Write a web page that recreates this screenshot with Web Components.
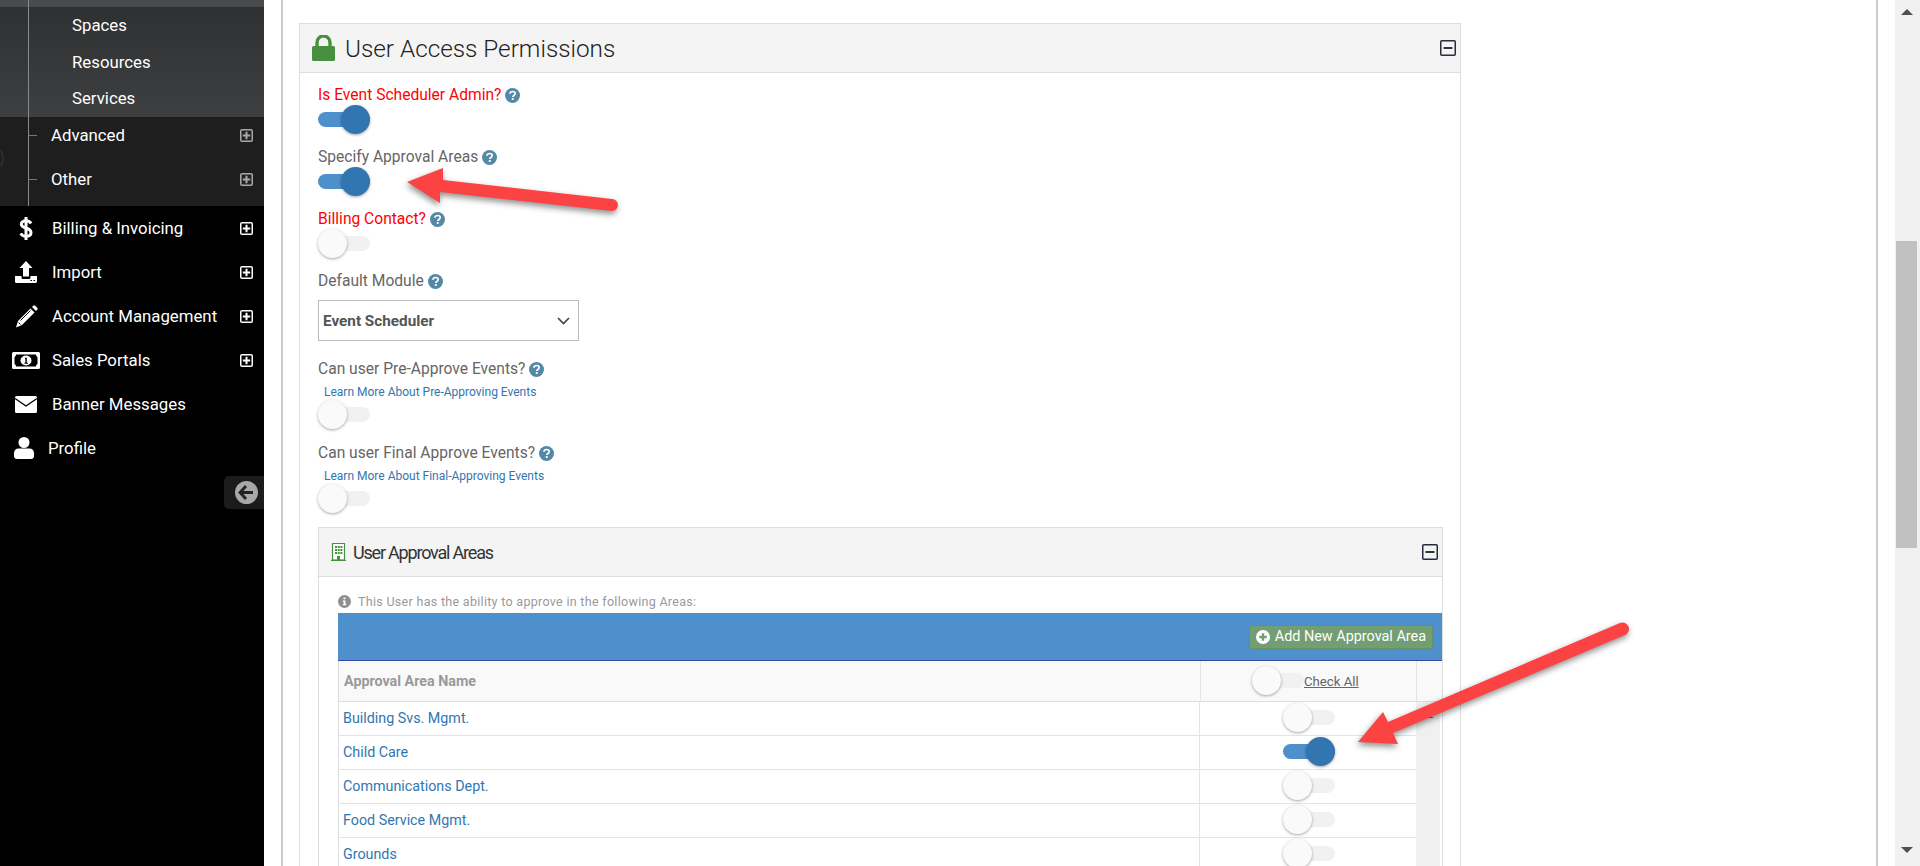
<!DOCTYPE html>
<html lang="en">
<head>
<meta charset="UTF-8">
<title>User Access Permissions</title>
<style>
    html, body { margin: 0; height: 866px; overflow: hidden; background: #fff; font-family: Roboto, "Liberation Sans", sans-serif; }
    body { display: flex; }
</style>
<script>
    const ICONS = {
        dollar: '<svg viewBox="0 0 14 25" width="14" height="25"><path d="M12 7.500C11 5.500 9 4.800 7 4.800 4.300 4.800 2.300 6 2.300 8.200 2.300 13 12 11 12 16.500 12 19 9.800 20.300 7 20.300 4.800 20.300 2.800 19.300 1.800 17.300" fill="none" stroke="#fff" stroke-width="3"/><path d="M5.500 1h3v23h-3z" fill="#fff"/></svg>',
        upload: '<svg viewBox="0 0 22 22" width="22" height="22"><path d="M11 0l6.500 7H14v8.500H8V7H4.500z" fill="#fff"/><path d="M0 15h6.500v1.500A1.500 1.500 0 0 0 8 18h6a1.500 1.500 0 0 0 1.500-1.500V15H22v5.500a1.500 1.500 0 0 1-1.500 1.500h-19A1.500 1.500 0 0 1 0 20.500z" fill="#fff"/><path d="M15.500 19.500h1.500M18.500 19.500h1.500" stroke="#000" stroke-width="1.200"/></svg>',
        pencil: '<svg viewBox="0 0 23 23" width="23" height="23"><path d="M15.500 3.500l4 4L7 20l-6 2.500L3 16z" fill="#fff"/><path d="M17 2l1.200-1.200a1.500 1.500 0 0 1 2 0l2 2a1.500 1.500 0 0 1 0 2L21 6z" fill="#fff"/><path d="M5.500 15.500l10-10M3.500 17.500l2 2" stroke="#000" stroke-width="1"/></svg>',
        money: '<svg viewBox="0 0 28 17" width="28" height="17"><path d="M0 1.500A1.500 1.500 0 0 1 1.500 0h25A1.500 1.500 0 0 1 28 1.500v14a1.500 1.500 0 0 1-1.500 1.500h-25A1.500 1.500 0 0 1 0 15.500z" fill="#fff"/><path d="M4 2.500h20c0 1.500 1 2.500 1.500 2.500v7c-.5 0-1.500 1-1.500 2.500H4c0-1.500-1-2.500-1.500-2.500V5C3 5 4 4 4 2.500z" fill="#000"/><ellipse cx="14" cy="8.500" rx="5.500" ry="5" fill="#fff"/><path d="M13 5.800h1.800v5H16v1h-3.600v-1h1V7h-.4z" fill="#000"/></svg>',
        envelope: '<svg viewBox="0 0 22 17" width="22" height="17"><path d="M0 1.500A1.500 1.500 0 0 1 1.500 0h19A1.500 1.500 0 0 1 22 1.500v14a1.500 1.500 0 0 1-1.500 1.500h-19A1.500 1.500 0 0 1 0 15.500z" fill="#fff"/><path d="M0 2.500l11 7.500 11-7.500" fill="none" stroke="#000" stroke-width="1.400"/></svg>',
        user: '<svg viewBox="0 0 20 22" width="20" height="22"><circle cx="10" cy="5.500" r="5.500" fill="#fff"/><path d="M0 19v-3c0-3 2-4.500 4.500-4.500h11C18 11.500 20 13 20 16v3c0 2-1.500 3-3 3H3c-1.500 0-3-1-3-3z" fill="#fff"/></svg>',
        lock: '<svg viewBox="0 0 23 26" width="23" height="26"><path d="M5 12V7.500a6.500 6.500 0 0 1 13 0V12" fill="none" stroke="#47903f" stroke-width="3.400"/><path d="M0 12.500A1.500 1.500 0 0 1 1.500 11h20a1.500 1.500 0 0 1 1.500 1.500v12a1.500 1.500 0 0 1-1.500 1.500h-20A1.500 1.500 0 0 1 0 24.500z" fill="#47903f"/></svg>',
        building: '<svg viewBox="0 0 15 18" width="15" height="18"><path d="M1.500.500h12v16.500h-12z" fill="#fff" stroke="#47903f" stroke-width="1.200"/><path d="M0 17.400h15" stroke="#47903f" stroke-width="1.200"/><path d="M4 3h2v2H4zM6.700 3h2v2h-2zM9.400 3h2v2h-2zM4 6h2v2H4zM6.700 6h2v2h-2zM9.400 6h2v2h-2zM4 9h2v2H4zM6.700 9h2v2h-2zM9.400 9h2v2h-2zM6 13h3v4H6z" fill="#47903f"/></svg>',
        help: '<svg viewBox="0 0 15 15" width="15" height="15"><circle cx="7.500" cy="7.500" r="7.500" fill="#5488a5"/><path d="M4.900 5.800c.1-1.500 1.200-2.300 2.700-2.300 1.500 0 2.600.8 2.600 2.100 0 1.900-2.400 1.900-2.400 3.500" fill="none" stroke="#fff" stroke-width="1.700"/><path d="M6.800 10h1.900v1.900H6.800z" fill="#fff"/></svg>',
        info: '<svg viewBox="0 0 13 13" width="13" height="13"><circle cx="6.500" cy="6.500" r="6.500" fill="#8f8f8f"/><path d="M5.500 2.500h2v1.800h-2zM4.800 5.500h2.700v3.600h.8v1.200H4.800V9.100h.8V6.700h-.8z" fill="#fff"/></svg>',
        plusCircle: '<svg viewBox="0 0 14 14" width="14" height="14"><circle cx="7" cy="7" r="7" fill="#fff"/><path d="M3.200 5.800h2.600V3.200h2.400v2.600h2.600v2.400H8.200v2.600H5.800V8.200H3.200z" fill="#739e73"/></svg>',
        back: '<svg viewBox="0 0 23 23" width="23" height="23"><circle cx="11.500" cy="11.500" r="11.500" fill="#a8a8a8"/><path d="M11 5L5 11.500l6 6.500M5.500 11.500H18" fill="none" stroke="#222" stroke-width="2.800"/></svg>',
        chevron: '<svg viewBox="0 0 13 8" width="13" height="8"><path d="M1 1l5.500 5.500L12 1" fill="none" stroke="#444" stroke-width="1.700"/></svg>'
    };

    class UiIcon extends HTMLElement {
        connectedCallback() {
            if (this.shadowRoot) return;
            this.attachShadow({ mode: 'open' });
            this.shadowRoot.innerHTML = `<style>:host{display:inline-flex;line-height:0}</style>${ICONS[this.getAttribute('name')]}`;
        }
    }
    customElements.define('ui-icon', UiIcon);

    // small square +/- box
    class BoxIcon extends HTMLElement {
        connectedCallback() {
            if (this.shadowRoot) return;
            this.attachShadow({ mode: 'open' });
            const minus = this.getAttribute('type') === 'minus';
            const c = this.getAttribute('color') || '#fff';
            this.shadowRoot.innerHTML = `<style>:host{display:inline-flex;line-height:0}</style>` + (minus
                ? `<svg viewBox="0 0 16 16" width="16" height="16"><rect x=".75" y=".75" width="14.500" height="14.500" rx="1" fill="none" stroke="#262c3a" stroke-width="1.500"/><path d="M3.500 8h9" stroke="#333" stroke-width="2"/></svg>`
                : `<svg viewBox="0 0 13 13" width="13" height="13"><rect width="13" height="13" rx="2" fill="${c}"/><rect x="1.500" y="1.500" width="10" height="10" fill="${this.getAttribute('inner') || '#000'}"/><path d="M2.800 6.500h7.400M6.500 2.800v7.400" stroke="${c}" stroke-width="2"/></svg>`);
        }
    }
    customElements.define('box-icon', BoxIcon);

    class NavItem extends HTMLElement {
        connectedCallback() {
            if (this.shadowRoot) return;
            this.attachShadow({ mode: 'open' });
            const expand = this.hasAttribute('expand');
            this.shadowRoot.innerHTML = `
            <style>
                :host { display: flex; align-items: center; height: 44px; color: #fff; font-size: 16.800px; padding-right: 11px; }
                .ic { width: ${this.getAttribute('icon-w') || '52'}px; flex: none; display: flex; justify-content: center; }
                .txt { flex: 1; white-space: nowrap; }
            </style>
            <span class="ic"><ui-icon name="${this.getAttribute('icon')}"></ui-icon></span>
            <span class="txt"><slot></slot></span>
            ${expand ? '<box-icon type="plus"></box-icon>' : ''}`;
        }
    }
    customElements.define('nav-item', NavItem);

    class NavSub extends HTMLElement {
        connectedCallback() {
            if (this.shadowRoot) return;
            this.attachShadow({ mode: 'open' });
            this.shadowRoot.innerHTML = `
            <style>
                :host { display: flex; align-items: center; height: 36px; margin-bottom: 8px; color: #fff; font-size: 16.800px; padding-left: 29px; padding-right: 11px; }
                i { width: 8px; height: 1px; background: #777; margin-right: 14px; flex: none; }
                span { flex: 1; }
            </style>
            <i></i><span><slot></slot></span><box-icon type="plus" color="#a9a9a9" inner="#222"></box-icon>`;
        }
    }
    customElements.define('nav-sub', NavSub);

    class AppSidebar extends HTMLElement {
        constructor() {
            super();
            this.attachShadow({ mode: 'open' });
            this.shadowRoot.innerHTML = `
            <style>
                :host { display: block; width: 264px; flex: none; height: 866px; background: #000; position: relative; overflow: hidden; font-family: Roboto, "Liberation Sans", sans-serif; }
                .tree { position: relative; }
                .tree::before { content: ""; position: absolute; left: 28px; top: 0; bottom: 0; width: 1px; background: #8a8a8a; z-index: 1; }
                .strip { height: 7px; background: #4a4b4d; }
                .leafs { height: 110px; background: linear-gradient(#2f3032, #3e3f41); display: flex; flex-direction: column; padding-left: 72px; box-sizing: border-box; }
                .leafs div { height: 36.500px; line-height: 36.500px; font-size: 16.800px; color: #fff; }
                .subs { background: #1e1e1e; height: 89px; }
                .collapse { position: absolute; right: 0; top: 476px; width: 40px; height: 33px; background: #1c1c1c; border-radius: 5px 0 0 5px; display: flex; align-items: center; padding-left: 11px; box-sizing: border-box; }
                .ghost { position: absolute; left: 0; top: 150px; }
            </style>
            <div class="tree">
                <div class="strip"></div>
                <div class="leafs"><div>Spaces</div><div>Resources</div><div>Services</div></div>
                <div class="subs"><nav-sub>Advanced</nav-sub><nav-sub>Other</nav-sub></div>
            </div>
            <svg class="ghost" width="6" height="17" viewBox="0 0 6 17"><path d="M0 1c4 1 4 14 0 15" fill="none" stroke="#3c3c3c"/></svg>
            <nav-item icon="dollar" expand>Billing &amp; Invoicing</nav-item>
            <nav-item icon="upload" expand>Import</nav-item>
            <nav-item icon="pencil" expand>Account Management</nav-item>
            <nav-item icon="money" expand>Sales Portals</nav-item>
            <nav-item icon="envelope">Banner Messages</nav-item>
            <nav-item icon="user" icon-w="48">Profile</nav-item>
            <div class="collapse"><ui-icon name="back"></ui-icon></div>`;
        }
    }
    customElements.define('app-sidebar', AppSidebar);

    class ToggleSwitch extends HTMLElement {
        constructor() {
            super();
            this.attachShadow({ mode: 'open' });
            this.shadowRoot.innerHTML = `
            <style>
                :host { display: block; width: 52px; height: 30px; position: relative; }
                .track { position: absolute; left: 0; right: 0; top: 7px; height: 15px; border-radius: 8px; background: #f1f1f1; }
                .knob { position: absolute; left: 0; top: 0; width: 29px; height: 29px; border-radius: 50%; background: #fafafa; box-shadow: 0 1px 3px rgba(0,0,0,.35); }
                :host([on]) .track { background: #4d90cc; }
                :host([on]) .knob { left: 23px; background: #3276b1; }
            </style>
            <div class="track"></div><div class="knob"></div>`;
        }
    }
    customElements.define('toggle-switch', ToggleSwitch);

    class FormField extends HTMLElement {
        connectedCallback() {
            if (this.shadowRoot) return;
            this.attachShadow({ mode: 'open' });
            this.shadowRoot.innerHTML = `
            <style>
                :host { display: block; margin-bottom: 12px; color: #666; font-size: 15.600px; }
                :host([red]) .lab { color: #f00; }
                .lab { display: flex; align-items: center; gap: 4px; height: 20px; white-space: nowrap; }
            </style>
            <div class="lab"><span class="t"></span><ui-icon name="help"></ui-icon></div>
            <slot></slot>`;
            this.shadowRoot.querySelector('.t').textContent = this.getAttribute('label');
        }
    }
    customElements.define('form-field', FormField);

    class LearnLink extends HTMLElement {
        constructor() {
            super();
            this.attachShadow({ mode: 'open' });
            this.shadowRoot.innerHTML = `
            <style>:host { display: block; height: 21px; line-height: 27px; padding-left: 6px; font-size: 12px; color: #3276b1; white-space: nowrap; }</style>
            <slot></slot>`;
        }
    }
    customElements.define('learn-link', LearnLink);

    class SelectBox extends HTMLElement {
        constructor() {
            super();
            this.attachShadow({ mode: 'open' });
            this.shadowRoot.innerHTML = `
            <style>
                :host { display: flex; align-items: center; justify-content: space-between; box-sizing: border-box; width: 261px; height: 41px; margin: 9px 0 18px; padding: 0 8px 0 4px; border: 1px solid #bbb; font-size: 15.300px; font-weight: 700; color: #555; }
            </style>
            <span><slot></slot></span><ui-icon name="chevron"></ui-icon>`;
        }
    }
    customElements.define('select-box', SelectBox);

    class PanelBox extends HTMLElement {
        connectedCallback() {
            if (this.shadowRoot) return;
            this.attachShadow({ mode: 'open' });
            this.shadowRoot.innerHTML = `
            <style>
                :host { display: block; border: 1px solid #ddd; background: #fff; }
                header { display: flex; align-items: center; height: 48px; background: #f4f4f4; border-bottom: 1px solid #ddd; color: #333; }
                h2 { margin: 0; flex: 1; font-weight: 300; white-space: nowrap; }
                :host([big]) header { padding: 0 4px 0 12px; }
                :host([big]) h2 { font-size: 24.300px; margin-left: 10px; color: #222; }
                :host(:not([big])) header { padding: 0 4px 0 12px; }
                :host(:not([big])) h2 { font-size: 18px; margin-left: 7px; letter-spacing: -1.200px; font-weight: 400; }
            </style>
            <header><slot name="icon"></slot><h2></h2><box-icon type="minus"></box-icon></header>
            <slot></slot>`;
            this.shadowRoot.querySelector('h2').textContent = this.getAttribute('title');
        }
    }
    customElements.define('panel-box', PanelBox);

    class AreaRow extends HTMLElement {
        connectedCallback() {
            if (this.shadowRoot) return;
            this.attachShadow({ mode: 'open' });
            this.shadowRoot.innerHTML = `
            <style>
                :host { display: grid; grid-template-columns: 861px 217px 24px; height: 34px; box-sizing: border-box; font-size: 14.300px; color: #3276b1; }
                .name { border-bottom: 1px solid #e4e4e4; border-left: 1px solid #ddd; padding-left: 4px; line-height: 33px; }
                .tog { border-bottom: 1px solid #e4e4e4; border-left: 1px solid #e4e4e4; display: flex; justify-content: center; padding-top: 1px; padding-left: 1px; }
                .bar { background: #f0f0f0; display: flex; justify-content: center; padding-top: 13px; box-sizing: border-box; }
                .caret { width: 0; height: 0; border-left: 6px solid transparent; border-right: 6px solid transparent; border-bottom: 3px solid #666; }
            </style>
            <div class="name"><slot></slot></div>
            <div class="tog"><toggle-switch ${this.hasAttribute('on') ? 'on' : ''}></toggle-switch></div>
            <div class="bar">${this.hasAttribute('caret') ? '<div class="caret"></div>' : ''}</div>`;
        }
    }
    customElements.define('area-row', AreaRow);

    class AreasTable extends HTMLElement {
        constructor() {
            super();
            this.attachShadow({ mode: 'open' });
            this.shadowRoot.innerHTML = `
            <style>
                :host { display: block; margin-left: 19px; }
                .note { display: flex; align-items: center; gap: 7px; height: 36px; padding-top: 12px; box-sizing: border-box; font-size: 12.500px; color: #999; letter-spacing: .3px; }
                .bar { height: 48px; box-sizing: border-box; background: #4d90cc; border-bottom: 1px solid #3949a0; display: flex; align-items: center; justify-content: flex-end; padding-right: 9px; }
                .btn { display: flex; align-items: center; gap: 5px; box-sizing: border-box; height: 24px; padding: 0 6px; background: #739e73; border: 1px solid #659265; border-radius: 2px; color: #fff; font-size: 14.400px; white-space: nowrap; }
                .head { display: grid; grid-template-columns: 861px 217px 24px; height: 41px; box-sizing: border-box; background: #f9f9f9; border-bottom: 1px solid #ddd; border-left: 1px solid #ddd; font-size: 14.300px; color: #999; }
                .head b { padding-left: 5px; line-height: 40px; }
                .chk { border-left: 1px solid #e4e4e4; border-right: 1px solid #e4e4e4; display: flex; align-items: center; padding-left: 51px; font-size: 13.200px; color: #666; text-decoration: underline; }
            </style>
            <div class="note"><ui-icon name="info"></ui-icon><span>This User has the ability to approve in the following Areas:</span></div>
            <div class="bar"><div class="btn"><ui-icon name="plusCircle"></ui-icon>Add New Approval Area</div></div>
            <div class="head"><b>Approval Area Name</b><div class="chk"><toggle-switch></toggle-switch><span>Check All</span></div><div></div></div>
            <slot></slot>`;
        }
    }
    customElements.define('areas-table', AreasTable);

    class ScrollTrack extends HTMLElement {
        constructor() {
            super();
            this.attachShadow({ mode: 'open' });
            this.shadowRoot.innerHTML = `
            <style>
                :host { display: flex; flex-direction: column; align-items: center; width: 25px; flex: none; height: 866px; background: #f1f1f1; box-sizing: border-box; padding-top: 9px; }
                .up, .down { width: 0; height: 0; border-left: 6px solid transparent; border-right: 6px solid transparent; }
                .up { border-bottom: 6px solid #505050; margin-left: -1px; }
                .down { border-top: 6px solid #505050; margin-top: 299px; margin-left: -1px; }
                .thumb { width: 21px; height: 307px; background: #c1c1c1; margin-top: 226px; margin-left: -2px; }
            </style>
            <div class="up"></div><div class="thumb"></div><div class="down"></div>`;
        }
    }
    customElements.define('scroll-track', ScrollTrack);

    class ArrowOverlay extends HTMLElement {
        constructor() {
            super();
            this.attachShadow({ mode: 'open' });
            this.shadowRoot.innerHTML = `
            <style>
                :host { position: absolute; left: 0; top: 0; width: 1920px; height: 866px; pointer-events: none; }
                svg { display: block; filter: drop-shadow(-1px 3px 3px rgba(0,0,0,.45)); }
            </style>
            <svg width="1920" height="866" viewBox="0 0 1920 866">
                <path d="M407 182L443 168 443 180 612 199A5.800 5.800 0 0 1 612 211L440 192 440 203Z" fill="#fc4343"/>
                <path d="M1358 742L1383 712 1388 722 1620 623A5.800 5.800 0 0 1 1625 635L1393 733 1398 744Z" fill="#fc4343"/>
            </svg>`;
        }
    }
    customElements.define('arrow-overlay', ArrowOverlay);

    class PageMain extends HTMLElement {
        constructor() {
            super();
            this.attachShadow({ mode: 'open' });
            this.shadowRoot.innerHTML = `
            <style>
                :host { display: block; flex: 1; height: 866px; overflow: hidden; box-sizing: border-box; padding: 0 17px; font-family: Roboto, "Liberation Sans", sans-serif; }
                .frame { border-left: 2px solid #ccc; border-right: 2px solid #ccc; height: 866px; box-sizing: border-box; padding: 23px 0 0 16px; }
                .outer { width: 1162px; }
            </style>
            <div class="frame"><div class="outer"><slot></slot></div></div>`;
        }
    }
    customElements.define('page-main', PageMain);
</script>
</head>
<body>
    <app-sidebar></app-sidebar>
    <page-main>
        <panel-box big title="User Access Permissions">
            <ui-icon slot="icon" name="lock"></ui-icon>
            <div style="padding:12px 0 0 18px">
                <form-field red label="Is Event Scheduler Admin?"><toggle-switch on></toggle-switch></form-field>
                <form-field label="Specify Approval Areas"><toggle-switch on></toggle-switch></form-field>
                <form-field red label="Billing Contact?"><toggle-switch></toggle-switch></form-field>
                <form-field label="Default Module" style="margin-bottom:0"><select-box>Event Scheduler</select-box></form-field>
                <form-field label="Can user Pre-Approve Events?" style="margin-bottom:13px"><learn-link>Learn More About Pre-Approving Events</learn-link><toggle-switch></toggle-switch></form-field>
                <form-field label="Can user Final Approve Events?" style="margin-bottom:13px"><learn-link>Learn More About Final-Approving Events</learn-link><toggle-switch></toggle-switch></form-field>
                <panel-box title="User Approval Areas" style="width:1123px">
                    <ui-icon slot="icon" name="building"></ui-icon>
                    <areas-table>
                        <area-row caret>Building Svs. Mgmt.</area-row>
                        <area-row on>Child Care</area-row>
                        <area-row>Communications Dept.</area-row>
                        <area-row>Food Service Mgmt.</area-row>
                        <area-row>Grounds</area-row>
                    </areas-table>
                </panel-box>
            </div>
        </panel-box>
    </page-main>
    <scroll-track></scroll-track>
    <arrow-overlay></arrow-overlay>
</body>
</html>
